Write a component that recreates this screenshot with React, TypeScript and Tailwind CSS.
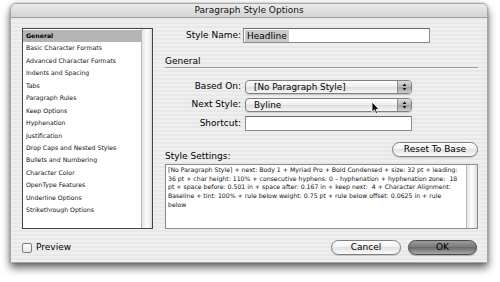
import React from "react"

const items = [
	"General",
	"Basic Character Formats",
	"Advanced Character Formats",
	"Indents and Spacing",
	"Tabs",
	"Paragraph Rules",
	"Keep Options",
	"Hyphenation",
	"Justification",
	"Drop Caps and Nested Styles",
	"Bullets and Numbering",
	"Character Color",
	"OpenType Features",
	"Underline Options",
	"Strikethrough Options",
]

const settings = [
	"[No Paragraph Style] + next: Body 1 + Myriad Pro + Bold Condensed + size: 32 pt + leading:",
	"36 pt + char height: 110% + consecutive hyphens: 0 – hyphenation + hyphenation zone:  18",
	"pt + space before: 0.501 in + space after: 0.167 in + keep next:  4 + Character Alignment:",
	"Baseline + tint: 100% + rule below weight: 0.75 pt + rule below offset: 0.0625 in + rule",
	"below",
]

function Scroller() {
	return (
		<div className="w-[11px] h-full border-l border-[#b8b8b8] bg-[linear-gradient(90deg,#e4e4e4,#fbfbfb_45%,#f4f4f4_70%,#dadada)]" />
	)
}

function PopUp({ value }: { value: string }) {
	return (
		<div className="flex w-[167px] h-[14px] rounded-[4px] border border-[#7f7f7f] overflow-hidden bg-[linear-gradient(180deg,#ffffff,#ececec_50%,#dcdcdc_51%,#f7f7f7)] shadow-[0_1px_1px_rgba(0,0,0,0.15)]">
			<div className="flex-1 pl-[8px] text-[8.8px] leading-[12px] text-[#000]">{value}</div>
			<div className="w-[14px] h-full border-l border-[#8a8a8a] bg-[linear-gradient(180deg,#dcdcdc,#b4b4b4_50%,#a0a0a0_51%,#cfcfcf)] flex items-center justify-center">
				<svg width="5" height="8" viewBox="0 0 5 8">
					<path d="M2.5 0.5 L4.5 3 L0.5 3 Z" fill="#111" />
					<path d="M2.5 7.5 L4.5 5 L0.5 5 Z" fill="#111" />
				</svg>
			</div>
		</div>
	)
}

function Pill({ label, primary, width }: { label: string; primary?: boolean; width: string }) {
	return (
		<div
			className={
				primary
					? "h-[15px] rounded-full border border-[#4a4a4a] bg-[linear-gradient(180deg,#9c9c9c,#7a7a7a_45%,#6a6a6a_50%,#a8a8a8)] flex items-center justify-center text-[9px] text-[#000] shadow-[0_1px_1px_rgba(0,0,0,0.25)] " + width
					: "h-[15px] rounded-full border border-[#7d7d7d] bg-[linear-gradient(180deg,#ffffff,#f2f2f2_45%,#e2e2e2_50%,#fafafa)] flex items-center justify-center text-[9px] text-[#000] shadow-[0_1px_1px_rgba(0,0,0,0.15)] " + width
			}
		>
			{label}
		</div>
	)
}

export default function App() {
	return (
		<div
			className="w-[500px] h-[282px] bg-white pl-[10px] pt-[3px] overflow-hidden antialiased"
			style={{ fontFamily: '"DejaVu Sans", sans-serif' }}
		>
			<div className="relative w-[478px] h-[260px] rounded-t-[6px] border border-[#a5a5a5] shadow-[0_5px_8px_rgba(0,0,0,0.6),0_0_3px_rgba(0,0,0,0.25)] bg-[repeating-linear-gradient(180deg,#efefef_0px,#efefef_2px,#e8e8e8_2px,#e8e8e8_4px)] flex flex-col">
				{/* title bar */}
				<div className="h-[14px] rounded-t-[6px] border-b border-[#9c9c9c] bg-[linear-gradient(180deg,#ececec,#d2d2d2)] text-center text-[9px] leading-[13px] text-[#111]">
					Paragraph Style Options
				</div>

				<div className="flex pl-[11px] pr-[9px] pt-[10px]">
					{/* category list */}
					<div className="w-[131px] h-[201px] border border-[#444] bg-white flex">
						<div className="flex-1 pt-[1px]">
							{items.map((it, i) => (
								<div
									key={it}
									className={
										i === 0
											? "h-[12.45px] pl-[3px] text-[6.2px] leading-[12.45px] bg-[#b4b4b4] font-bold text-[#000]"
											: "h-[12.45px] pl-[3px] text-[6.2px] leading-[12.45px] text-[#111]"
									}
								>
									{it}
								</div>
							))}
						</div>
						<Scroller />
					</div>

					{/* right side */}
					<div className="ml-[12px] w-[313px] flex flex-col">
						<div className="flex items-center h-[15px]">
							<div className="w-[76px] text-right text-[9px] text-[#000]">Style Name:</div>
							<div className="ml-[2px] w-[187px] h-[15px] border border-[#8c8c8c] border-t-[#6a6a6a] bg-white flex items-center pl-[1px]">
								<span className="bg-[#c9c9c9] px-[2px] text-[9px] leading-[12px] text-[#000]">Headline</span>
							</div>
						</div>

						<div className="mt-[13px] h-[12px] border-b border-[#a0a0a0] text-[9px] leading-[11px] text-[#000]">
							General
						</div>

						<div className="mt-[12px] flex items-center h-[14px]">
							<div className="w-[76px] text-right text-[9px] text-[#000]">Based On:</div>
							<div className="ml-[4px]">
								<PopUp value="[No Paragraph Style]" />
							</div>
						</div>
						<div className="mt-[4px] flex items-center h-[14px]">
							<div className="w-[76px] text-right text-[9px] text-[#000]">Next Style:</div>
							<div className="ml-[4px]">
								<PopUp value="Byline" />
							</div>
						</div>
						<div className="mt-[4px] flex items-center h-[15px]">
							<div className="w-[76px] text-right text-[9px] text-[#000]">Shortcut:</div>
							<div className="ml-[4px] w-[167px] h-[15px] border border-[#8c8c8c] border-t-[#6a6a6a] bg-white" />
						</div>

						<div className="mt-[11px] h-[22px] flex justify-between items-start">
							<div className="pt-[9px] text-[9px] leading-[11px] text-[#000]">Style Settings:</div>
							<Pill label="Reset To Base" width="w-[86px]" />
						</div>

						<div className="h-[65px] border border-[#8a8a8a] bg-white flex">
							<div className="flex-1 pl-[2px] pt-[1px] text-[6.2px] leading-[8.7px] text-[#111] whitespace-pre">
								{settings.join("\n")}
							</div>
							<Scroller />
						</div>
					</div>
				</div>

				{/* bottom row */}
				<div className="mt-[11px] h-[15px] flex items-center pl-[11px] pr-[10px]">
					<div className="w-[10px] h-[10px] rounded-[2px] border border-[#7a7a7a] bg-[linear-gradient(180deg,#ffffff,#e4e4e4)]" />
					<div className="ml-[4px] text-[9px] text-[#000]">Preview</div>
					<div className="ml-auto flex gap-[7px]">
						<Pill label="Cancel" width="w-[70px]" />
						<Pill label="OK" primary width="w-[69px]" />
					</div>
				</div>

				{/* mouse pointer */}
				<svg className="absolute left-[360px] top-[97px]" width="9" height="14" viewBox="0 0 9 14">
					<path d="M1 1 L1 11 L3.4 8.8 L5 12.6 L6.6 11.9 L5 8.3 L8 8.3 Z" fill="#000" stroke="#fff" strokeWidth="0.8" />
				</svg>
			</div>
		</div>
	)
}
